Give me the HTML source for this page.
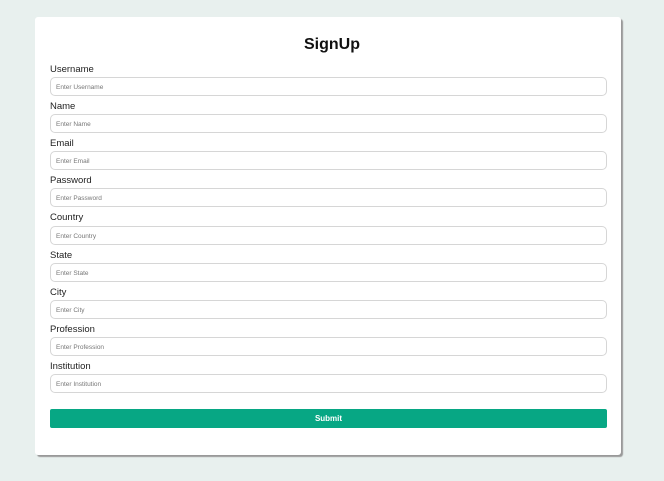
<!DOCTYPE html><html><head><style>
body{margin:0;background:#e8f0ee;width:664px;height:481px;overflow:hidden;font-family:"Liberation Sans",sans-serif}
.card{position:absolute;left:35px;top:17px;width:586px;height:438px;background:#fff;border-radius:3px;box-shadow:2px 2px 1px #999}
h1{position:absolute;left:0;right:0;top:36px;margin:0;text-align:center;font-size:16px;font-weight:bold;color:#111;line-height:18px}
.l{position:absolute;left:50px;font-size:9.5px;color:#222;line-height:11px}
.i{position:absolute;left:50px;border:1px solid #d6d6d6;border-radius:5px;font-size:6.5px;color:#777;line-height:19px;padding-left:5px;box-sizing:border-box;width:557px;height:19px}
.b{position:absolute;left:50px;top:409px;width:557px;height:19px;background:#07a784;border-radius:2px;color:#fff;font-size:8px;font-weight:bold;text-align:center;line-height:19px}
</style></head><body><div class="card"></div>
<h1>SignUp</h1>
<div class="l" style="top:64px">Username</div><div class="i" style="top:77px">Enter Username</div>
<div class="l" style="top:101px">Name</div><div class="i" style="top:114px">Enter Name</div>
<div class="l" style="top:138px">Email</div><div class="i" style="top:151px">Enter Email</div>
<div class="l" style="top:175px">Password</div><div class="i" style="top:188px">Enter Password</div>
<div class="l" style="top:212px">Country</div><div class="i" style="top:226px">Enter Country</div>
<div class="l" style="top:250px">State</div><div class="i" style="top:263px">Enter State</div>
<div class="l" style="top:287px">City</div><div class="i" style="top:300px">Enter City</div>
<div class="l" style="top:324px">Profession</div><div class="i" style="top:337px">Enter Profession</div>
<div class="l" style="top:361px">Institution</div><div class="i" style="top:374px">Enter Institution</div>
<div class="b">Submit</div>
</body></html>
